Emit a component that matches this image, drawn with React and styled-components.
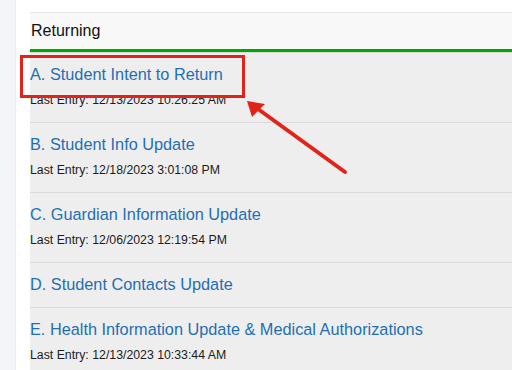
import styled, { createGlobalStyle } from "styled-components";

const GlobalStyle = createGlobalStyle`
	html, body {
		margin: 0;
		padding: 0;
		background: #ffffff;
		font-family: "Liberation Sans", Arial, Helvetica, sans-serif;
	}
`;

const Page = styled.div`
	position: relative;
	display: flex;
	width: 512px;
	height: 370px;
	overflow: hidden;
	background: #ffffff;
`;

const SideStrip = styled.div`
	width: 15px;
	flex-shrink: 0;
	background: #f3f5f8;
	border-right: 1px solid #e9edf1;
`;

const Main = styled.div`
	flex: 1;
	padding: 12px 0 0 14px;
`;

const Panel = styled.div`
	border-top: 1px solid #e6e6e6;
	background: #eeeeee;
	height: 100%;
`;

const Header = styled.div`
	height: 36px;
	display: flex;
	align-items: center;
	padding-left: 1px;
	background: #f8f8f8;
	border-bottom: 3px solid #00a800;
	font-size: 16px;
	color: #111111;
`;

const Row = styled.div`
	border-top: 1px solid #dadada;
	padding: 10px 0 ${(p) => (p.$hasEntry ? "13px" : "12px")};
`;

const Title = styled.a`
	display: block;
	font-size: 16.3px;
	line-height: 22px;
	color: #1f6fb4;
	text-decoration: none;
	white-space: nowrap;
`;

const Entry = styled.div`
	margin-top: 6px;
	font-size: 12.3px;
	line-height: 18px;
	color: #1c1c1c;
	white-space: nowrap;
`;

const Highlight = styled.div`
	position: absolute;
	left: 20px;
	top: 55px;
	width: 225px;
	height: 43px;
	box-sizing: border-box;
	border: 3px solid #e2231a;
	pointer-events: none;
`;

const Overlay = styled.svg`
	position: absolute;
	left: 0;
	top: 0;
	pointer-events: none;
`;

const forms = [
	{ title: "A. Student Intent to Return", entry: "12/13/2023 10:26:25 AM" },
	{ title: "B. Student Info Update", entry: "12/18/2023 3:01:08 PM" },
	{ title: "C. Guardian Information Update", entry: "12/06/2023 12:19:54 PM" },
	{ title: "D. Student Contacts Update" },
	{ title: "E. Health Information Update & Medical Authorizations", entry: "12/13/2023 10:33:44 AM" },
];

const App = () => {
	return (
		<>
			<GlobalStyle />
			<Page>
				<SideStrip />
				<Main>
					<Panel>
						<Header>Returning</Header>
						{forms.map((f) => (
							<Row key={f.title} $hasEntry={!!f.entry}>
								<Title href="#">{f.title}</Title>
								{f.entry && <Entry>Last Entry: {f.entry}</Entry>}
							</Row>
						))}
					</Panel>
				</Main>

				{/* annotation */}
				<Highlight />
				<Overlay width="512" height="370" viewBox="0 0 512 370">
					<line x1="345" y1="172" x2="258" y2="109" stroke="#e2231a" strokeWidth="4" strokeLinecap="round" />
					<polygon points="247,101 252,117 265,104" fill="#e2231a" />
				</Overlay>
			</Page>
		</>
	);
};

export default App;
